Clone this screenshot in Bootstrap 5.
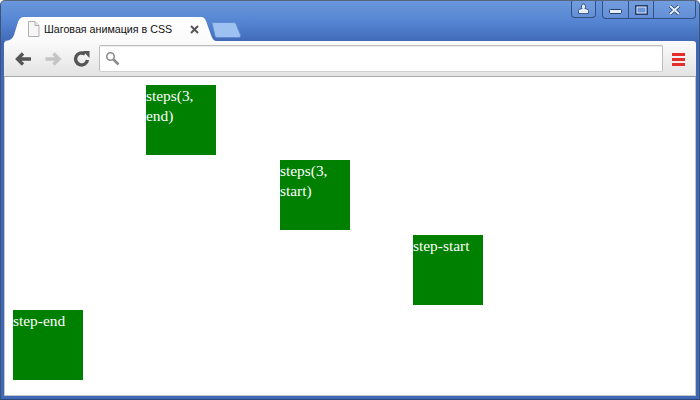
<!DOCTYPE html>
<html lang="ru">
<head>
    <meta charset="UTF-8">
    <meta name="viewport" content="width=device-width, initial-scale=1.0">
    <title>Шаговая анимация в CSS</title>
    <link rel="stylesheet" href="https://cdn.jsdelivr.net/npm/bootstrap@5.3.0/dist/css/bootstrap.min.css">
    <style>
        html, body { height: 400px; overflow: hidden; }
        body { background: #fff; }
        .win-frame { height: 400px; background: linear-gradient(#6a97dc 0, #5686d3 20px, #3f68b6 42px, #3f68b6 100%); border: 1px solid #3d5474; border-top-color: #56657c; border-bottom-color: #2d4677; border-radius: 5px 5px 0 0; padding: 0 3px 3px 3px; }
        .tab-strip { height: 40px; }
        .win-btns { height: 18px; }
        .win-group { border: 1px solid #33507f; border-top: 0; border-radius: 0 0 4px 4px; background: rgba(255,255,255,.06); }
        .win-btn { height: 17px; }
        .win-btn + .win-btn { border-left: 1px solid #33507f; }
        .btn-user { width: 25px; margin-right: 6px; }
        .btn-min, .btn-max { width: 25px; }
        .btn-close-win { width: 42px; }
        .chrome-tab { width: 212px; height: 24px; margin-top: 16px; font: 10.7px "Liberation Sans", sans-serif; color: #111; }
        .tab-shape { position: absolute; left: 0; top: 0; }
        .tab-inner { position: relative; padding-left: 23px; height: 24px; }
        .tab-label { width: 146px; margin-left: 4px; white-space: nowrap; }
        .new-tab { margin-top: 21px; margin-left: -6px; }
        .tool-bar { height: 36px; background: linear-gradient(#fbfbfb, #e3e3e3); border-bottom: 1px solid #a9a9a9; padding: 0 10px 0 11px; border-radius: 3px 3px 0 0; }
        .tool-icon { width: 29px; }
        .omni-box { height: 27px; width: 564px; margin-left: -3px; background: #fff; border: 1px solid #bdbdbd; border-bottom-color: #cfcfcf; border-radius: 2px; box-shadow: inset 0 1px 1px #ececec; padding-left: 5px; }
        .menu-icon { width: 14px; }
        .page-area { height: 319px; background: #fff; border-left: 1px solid #c4c4c4; border-right: 1px solid #c4c4c4; border-bottom: 1px solid #c4c4c4; padding: 8px; }
        .step-square { width: 70px; height: 70px; background: #008000; color: #fff; font: 15.4px/20px "Liberation Serif", serif; margin-bottom: 5px; padding: 1px 0 0 0; }
    </style>
</head>
<body>
    <div class="win-frame d-flex flex-column">
        <!-- Onglets et boutons de la fenêtre -->
        <div class="tab-strip d-flex justify-content-between">
            <div class="d-flex">
                <div class="chrome-tab position-relative">
                    <svg class="tab-shape" width="212" height="24" viewBox="0 0 212 24">
                        <defs><linearGradient id="tabFill" x1="0" y1="0" x2="0" y2="1"><stop offset="0" stop-color="#fff"/><stop offset="1" stop-color="#fbfbfb"/></linearGradient></defs>
                        <path d="M0 24 C6 24 9 21 10 18 L14 5 C15 2 17 0 20 0 L197 0 C200 0 201 2 202 4 L207 18 C208 21 210 24 212 24 Z" fill="url(#tabFill)"/>
                    </svg>
                    <div class="tab-inner d-flex align-items-center">
                        <svg width="13" height="16" viewBox="0 0 13 16"><path d="M1.5 .5 H8 L12 4.500 V15.500 H1.500 Z" fill="#f6f6f6" stroke="#b0b0b0"/><path d="M8 .5 V4.500 H12" fill="#e4e4e4" stroke="#b0b0b0"/></svg>
                        <span class="tab-label">Шаговая анимация в CSS</span>
                        <svg width="9" height="9" viewBox="0 0 9 9"><path d="M1 1 L8 8 M8 1 L1 8" stroke="#555" stroke-width="2"/></svg>
                    </div>
                </div>
                <svg class="new-tab" width="32" height="16" viewBox="0 0 32 16"><path d="M2 1 C1 .5 1 .5 3 .5 L23 .5 C25 .5 26 1 26.500 3 L30.500 13 C31 15 30 15.500 28 15.500 L8 15.500 C6 15.500 5.500 15 5 14 Z" fill="#9dc1f0" stroke="#5f8cd0"/></svg>
            </div>
            <div class="win-btns d-flex">
                <div class="win-group btn-user win-btn d-flex align-items-center justify-content-center">
                    <svg width="13" height="12" viewBox="0 0 13 12"><path d="M4.500 3 a2 2 0 0 1 4 0 v1 a2 2 0 0 1 -.7 1.500 l3.200 1 a1 1 0 0 1 .5 1 v3 h-10 v-3 a1 1 0 0 1 .5 -1 l3.200 -1 a2 2 0 0 1 -.7 -1.500 Z" fill="#e6eefa" stroke="#26406e" stroke-width=".8"/></svg>
                </div>
                <div class="win-group d-flex">
                    <div class="win-btn btn-min d-flex align-items-center justify-content-center">
                        <svg width="13" height="6" viewBox="0 0 13 6" class="mt-1"><rect x=".5" y=".5" width="12" height="4" rx="1" fill="#e6eefa" stroke="#26406e"/></svg>
                    </div>
                    <div class="win-btn btn-max d-flex align-items-center justify-content-center">
                        <svg width="13" height="10" viewBox="0 0 13 10"><rect x="1" y="1" width="11" height="8" fill="none" stroke="#26406e" stroke-width="2"/><rect x="2" y="2" width="9" height="6" fill="none" stroke="#dfe9f8"/></svg>
                    </div>
                    <div class="win-btn btn-close-win d-flex align-items-center justify-content-center">
                        <svg width="13" height="10" viewBox="0 0 13 10"><path d="M2 1 L11 9 M11 1 L2 9" stroke="#26406e" stroke-width="3.500"/><path d="M2 1 L11 9 M11 1 L2 9" stroke="#e6eefa" stroke-width="2"/></svg>
                    </div>
                </div>
            </div>
        </div>

        <!-- Barre d'outils -->
        <div class="tool-bar d-flex align-items-center">
            <div class="tool-icon d-flex">
                <svg width="18" height="14" viewBox="0 0 18 14"><path d="M8 1.500 L2.500 7 L8 12.500 M2.500 7 H16" fill="none" stroke="#555" stroke-width="3.400"/></svg>
            </div>
            <div class="tool-icon d-flex">
                <svg width="18" height="14" viewBox="0 0 18 14"><path d="M9.500 1.500 L15 7 L9.500 12.500 M15 7 H1.500" fill="none" stroke="#c4c4c4" stroke-width="3.400"/></svg>
            </div>
            <div class="tool-icon d-flex">
                <svg width="18" height="18" viewBox="0 0 18 18"><path d="M14.500 10 A6 6 0 1 1 12 4" fill="none" stroke="#555" stroke-width="3.400"/><path d="M10 1 L16.500 1 L16.500 8 Z" fill="#555"/></svg>
            </div>
            <div class="omni-box d-flex align-items-center">
                <svg width="15" height="15" viewBox="0 0 15 15"><circle cx="5.500" cy="5.500" r="3.700" fill="#fff" stroke="#8c8c8c" stroke-width="1.600"/><path d="M8.500 8.500 L13.500 13.500" stroke="#8c8c8c" stroke-width="2.500"/></svg>
            </div>
            <div class="menu-icon ms-auto d-flex">
                <svg width="14" height="14" viewBox="0 0 14 14"><g fill="#e52b2b"><rect y="1" width="13" height="3"/><rect y="6" width="13" height="3"/><rect y="11" width="13" height="3"/></g></svg>
            </div>
        </div>

        <!-- Contenu de la page -->
        <div class="page-area" id="page-area"></div>
    </div>

    <script>
    const squares = [
        { label: "steps(3, end)", left: 133 },
        { label: "steps(3, start)", left: 267 },
        { label: "step-start", left: 400 },
        { label: "step-end", left: 0 }
    ];
    const pageArea = document.getElementById("page-area");
    squares.forEach(item => {
        const div = document.createElement("div");
        div.className = "step-square";
        div.style.marginLeft = item.left + "px";
        div.textContent = item.label;
        pageArea.appendChild(div);
    });
    </script>
    <script src="https://cdn.jsdelivr.net/npm/bootstrap@5.3.0/dist/js/bootstrap.bundle.min.js"></script>
</body>
</html>
